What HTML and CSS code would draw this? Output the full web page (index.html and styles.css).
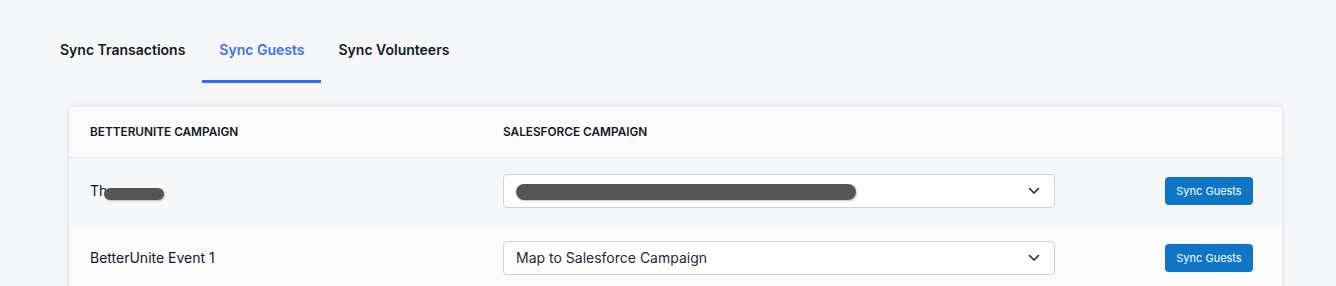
FILE: index.html
```html
<!DOCTYPE html>
<html lang="en">
<head>
<meta charset="utf-8">
<title>Sync Guests</title>
<link rel="stylesheet" href="styles.css">
</head>
<body>
<nav class="tabs">
  <div class="tab">Sync Transactions</div>
  <div class="tab tab-active">Sync Guests</div>
  <div class="tab">Sync Volunteers</div>
</nav>
<section class="card">
  <div class="row head">
    <div class="cell">BETTERUNITE CAMPAIGN</div>
    <div class="cell">SALESFORCE CAMPAIGN</div>
    <div class="cell"></div>
  </div>
  <div class="row body-row alt">
    <div class="cell name">Th<span class="redact redact-name"></span></div>
    <div class="cell">
      <div class="select">
        <span class="redact redact-select"></span>
        <svg class="chev" width="12" height="8" viewBox="0 0 12 8"><path d="M1.5 1.5 6 6l4.5-4.5" fill="none" stroke="#1f2937" stroke-width="1.6" stroke-linecap="round" stroke-linejoin="round"/></svg>
      </div>
    </div>
    <div class="cell act"><button class="btn">Sync Guests</button></div>
  </div>
  <div class="row body-row">
    <div class="cell name">BetterUnite Event 1</div>
    <div class="cell">
      <div class="select">
        <span class="placeholder">Map to Salesforce Campaign</span>
        <svg class="chev" width="12" height="8" viewBox="0 0 12 8"><path d="M1.5 1.5 6 6l4.5-4.5" fill="none" stroke="#1f2937" stroke-width="1.6" stroke-linecap="round" stroke-linejoin="round"/></svg>
      </div>
    </div>
    <div class="cell act"><button class="btn">Sync Guests</button></div>
  </div>
</section>
</body>
</html>
```
FILE: styles.css
```css
* { box-sizing: border-box; }
html, body { margin: 0; padding: 0; }
body {
  background: #f6f7f9;
  font-family: Inter, "Liberation Sans", Arial, sans-serif;
  color: #111827;
  overflow: hidden;
}
.tabs {
  display: flex;
  padding: 20px 0 0 43px;
}
.tab {
  padding: 20px 17px 20px;
  font-size: 14px;
  line-height: 20px;
  font-weight: 600;
  color: #111827;
  border-bottom: 3px solid transparent;
}
.tab-active {
  color: #3b6cf6;
  border-bottom-color: #2d6bff;
}
.card {
  margin: 24px 54px 0 69px;
  background: #fbfbfc;
  border-radius: 4px 4px 0 0;
  box-shadow: 0 0 6px rgba(100, 110, 180, 0.16), 0 1px 2px rgba(100, 110, 180, 0.10);
}
.row {
  display: grid;
  grid-template-columns: 413px 552px 1fr;
  align-items: center;
  padding: 0 29px 0 21px;
}
.head {
  height: 51px;
  border-bottom: 1px solid #e6e7ee;
  font-size: 11.8px;
  font-weight: 600;
  color: #111827;
}
.body-row {
  height: 67px;
  padding-bottom: 1px;
  background: #fbfbfc;
}
.body-row.alt { background: #f6f7f9; }
.name {
  font-size: 14px;
  line-height: 20px;
  display: flex;
  align-items: center;
}
.redact {
  display: inline-block;
  background: #555555;
  border-radius: 7px;
  box-shadow: 1px 1px 2px rgba(0,0,0,0.25);
}
.redact-name {
  width: 60px;
  height: 12px;
  margin-left: -3px;
  margin-top: 6px;
}
.select {
  height: 34px;
  background: #fff;
  border: 1px solid #cfd2da;
  border-radius: 4px;
  display: flex;
  align-items: center;
  justify-content: space-between;
  padding: 0 14px 0 12px;
  font-size: 14px;
  color: #1f2937;
}
.redact-select {
  width: 340px;
  height: 16px;
  border-radius: 8px;
  margin-top: 2px;
}
.placeholder { line-height: 20px; }
.chev { display: block; }
.act {
  display: flex;
  justify-content: flex-end;
}
.btn {
  width: 88px;
  height: 28px;
  border: none;
  border-radius: 4px;
  background: #0f76c7;
  color: #fff;
  font-family: Inter, "Liberation Sans", Arial, sans-serif;
  font-size: 11px;
  padding: 0;
}
```
